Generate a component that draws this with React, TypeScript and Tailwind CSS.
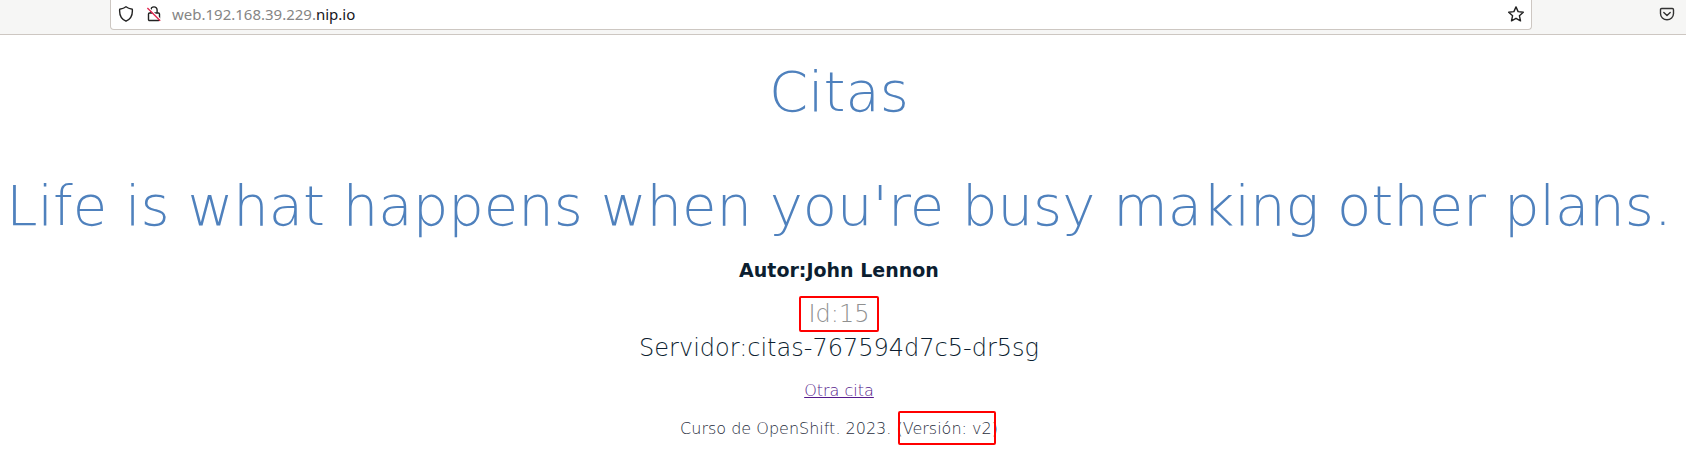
export default function App() {
  return (
    <div className="min-h-screen bg-white font-['DejaVu_Sans',sans-serif] font-extralight text-[#0c1e30]">
      <header className="flex h-[35px] items-start border-b border-[#cdc7c2] bg-[#f6f6f5] pl-[110px] pr-[11px] font-['Noto_Sans',sans-serif] font-normal">
        <div className="flex h-[30px] grow items-center rounded-b border border-t-0 border-[#cdc7c2] bg-white px-[7px] pb-px">
          <button type="button" aria-label="Tracking protection" className="mr-3">
            <svg className="size-4" viewBox="0 0 16 16" fill="none" stroke="#222" strokeWidth="1.4" strokeLinejoin="round">
              <path d="M8 .8C6.5 2 4.3 2.8 1.7 3.2 1.2 8.5 3 13 8 15.2 13 13 14.8 8.5 14.3 3.2 11.7 2.8 9.5 2 8 .8Z" />
            </svg>
          </button>
          <button type="button" aria-label="Connection not secure" className="mr-2.5">
            <svg className="size-4" viewBox="0 0 16 16" fill="none">
              <path d="M4.9 7V4a3.1 3.1 0 0 1 6.2 0v3M3.5 7h9a1 1 0 0 1 1 1v5.5a1 1 0 0 1-1 1h-9a1 1 0 0 1-1-1V8a1 1 0 0 1 1-1Z" stroke="#222" strokeWidth="1.4" />
              <path d="m2.4 1.6 12.8 12.8" stroke="#fff" strokeWidth="1.5" />
              <path d="m1.4 2 12.8 12.8" stroke="#e22850" strokeWidth="1.4" />
            </svg>
          </button>
          <div className="relative grow text-[15px] leading-6">
            <input aria-label="Address" readOnly defaultValue="web.192.168.39.229.nip.io" className="block w-full text-transparent outline-none" />
            <span aria-hidden="true" className="pointer-events-none absolute inset-0 text-[#858585]">
              web.192.168.39.229.<span className="text-[#15141a]">nip.io</span>
            </span>
          </div>
          <button type="button" aria-label="Bookmark this page">
            <svg className="size-4" viewBox="0 0 16 16" fill="none" stroke="#222" strokeWidth="1.4" strokeLinejoin="round">
              <path d="m8 .9 2.1 4.7 5.200.6-3.9 3.5 1.1 5.1L8 12.3l-4.5 2.5 1.1-5.1L.7 6.200l5.200-.6Z" />
            </svg>
          </button>
        </div>
        <button type="button" aria-label="Save to Pocket" className="ml-[127px] mt-1.5">
          <svg className="size-4" viewBox="0 0 16 16" fill="none" stroke="#333" strokeWidth="1.4" strokeLinecap="round" strokeLinejoin="round">
            <path d="M2.7 2.5h10.6a1.2 1.2 0 0 1 1.2 1.2v3.8a6.5 6.3 0 0 1-13 0V3.7a1.2 1.2 0 0 1 1.2-1.2ZM4.8 6.4 8 9.5l3.2-3.1" />
          </svg>
        </button>
      </header>
      <main className="flex flex-col items-center pl-2 pr-4 pt-[25px] text-center">
        <h1 className="text-[56px] leading-[64px] text-[#4f81bd]">Citas</h1>
        <h1 className="mt-[50px] whitespace-nowrap text-[56px] leading-[64px] text-[#4f81bd]">
          Life is what happens when you're busy making other plans.
        </h1>
        <h2 className="mt-5 text-[19px] font-bold leading-6">Autor:John Lennon</h2>
        <p className="mt-3.5 rounded-[2px] border-2 border-[#ff0000] px-2 text-2xl leading-8 text-[#909090]">Id:15</p>
        <p className="text-2xl leading-8">Servidor:citas-767594d7c5-dr5sg</p>
        <a href="#" className="mt-[15px] text-base leading-6 text-[#551a8b] underline">Otra cita</a>
        <footer className="mt-2.5 text-base leading-8 text-[#1f2d3d]">
          Curso de OpenShift. 2023.{" "}
          <span className="relative">
            (Versión: v2)
            <span aria-hidden="true" className="absolute -bottom-[7px] -top-2 left-0.5 right-0.5 rounded-[2px] border-2 border-[#ff0000]" />
          </span>
        </footer>
      </main>
    </div>
  );
}
